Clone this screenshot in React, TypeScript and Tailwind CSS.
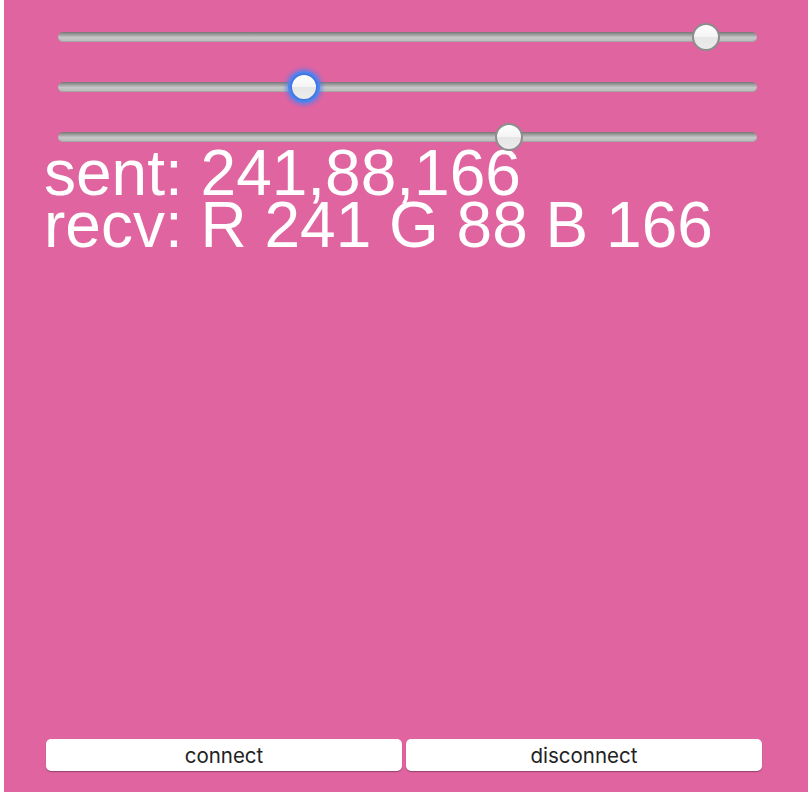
const VALUES = [241, 88, 166]

function Slider({ value, focused }: { value: number; focused?: boolean }) {
  const left = (value / 255) * 671
  return (
    <div className="relative h-[50px] w-[699px]">
      <div className="absolute left-0 right-0 top-[20px] h-[10px] rounded-full bg-[linear-gradient(#767676,#9c9c9c_25%,#c6c6c6_55%,#b9b9b9)] shadow-[inset_0_-1px_0_#a6a6a6]" />
      <div
        className={
          'absolute top-[11px] h-[28px] w-[28px] rounded-full border-2 bg-[linear-gradient(#ffffff,#f4f4f4_50%,#e6e6e6_51%,#ececec)]' +
          (focused
            ? ' border-[#3f78e6] shadow-[0_0_0_2px_#4a86f0,0_0_3px_5px_rgba(70,130,245,0.5)]'
            : ' border-[#8d8d8d]')
        }
        style={{ left }}
      />
    </div>
  )
}

export default function App() {
  return (
    <div className="flex h-[792px] w-[808px] bg-white">
      <div className="w-[4px] shrink-0 bg-white" />
      <div className="flex flex-1 flex-col bg-[#e064a0]">
        <div className="flex flex-col pl-[54px] pt-[12px]">
          {VALUES.map((v, i) => (
            <Slider key={i} value={v} focused={i === 1} />
          ))}
        </div>
        <div className="-mt-[15px] pl-[40px] font-['Liberation_Sans',Arial,sans-serif] text-[64px] leading-[52px] text-white">
          <div>sent: 241,88,166</div>
          <div>recv: R 241 G 88 B 166</div>
        </div>
        <div className="mt-auto mb-[21px] flex gap-[4px] pl-[42px]">
          <button className="h-[32px] w-[356px] rounded-[5px] bg-white pt-[3px] font-['Inter',sans-serif] text-[20.5px] leading-none text-[#222] shadow-[0_1px_1px_rgba(0,0,0,0.35)]">
            connect
          </button>
          <button className="h-[32px] w-[356px] rounded-[5px] bg-white pt-[3px] font-['Inter',sans-serif] text-[20.5px] leading-none text-[#222] shadow-[0_1px_1px_rgba(0,0,0,0.35)]">
            disconnect
          </button>
        </div>
      </div>
    </div>
  )
}
